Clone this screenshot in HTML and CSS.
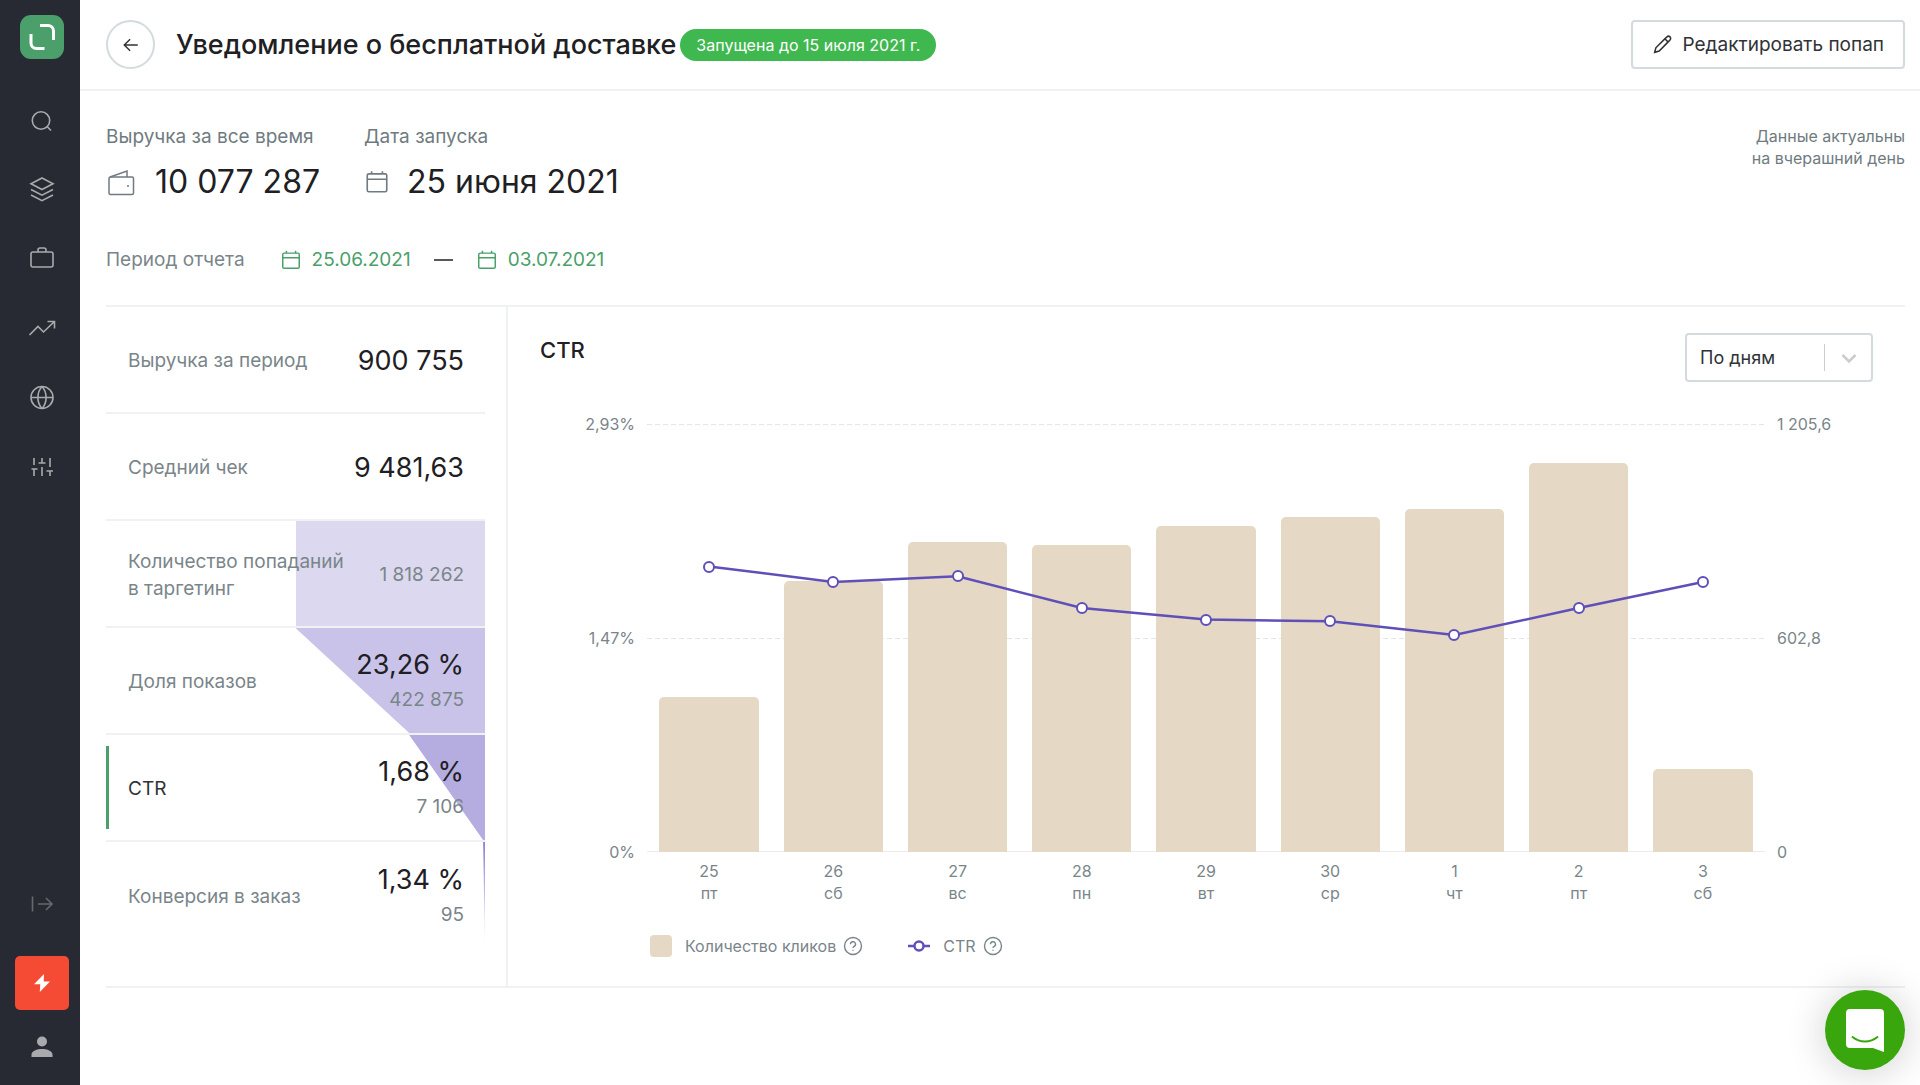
FILE: index.html
```html
<!DOCTYPE html>
<html lang="ru">
<head>
  <meta charset="utf-8">
  <meta name="viewport" content="width=device-width, initial-scale=1">
  <title>Уведомление о бесплатной доставке</title>
  <link rel="stylesheet" href="styles.css">
</head>
<body>
  <svg class="sprite" aria-hidden="true">
    <symbol id="calendar" viewBox="0 0 24 24">
      <rect x="3" y="4.500" width="18" height="16.500" rx="1.500"/>
      <path d="M3 9.500h18M7 2v2.500M17 2v2.500"/>
    </symbol>
    <symbol id="help" viewBox="0 0 20 20">
      <circle cx="10" cy="10" r="8.500"/>
      <path d="M7.500 8.200a2.500 2.500 0 1 1 3.700 2.200c-.8.450-1.200.8-1.200 1.500M10 13.800v1"/>
    </symbol>
  </svg>

  <div class="app">
    <aside class="sidebar">
      <a class="logo" href="#" aria-label="Главная">
        <svg viewBox="0 0 44 44"><path d="M20 10.500h8a5.500 5.500 0 0 1 5.500 5.500v9M24.500 33.500h-8A5.500 5.500 0 0 1 11 28v-9"/></svg>
      </a>
      <nav class="nav" aria-label="Разделы">
        <a class="nav-link" href="#" aria-label="Поиск"><svg class="icon" viewBox="0 0 28 28"><circle cx="13" cy="13.500" r="8.700"/><path d="m19.300 19.800 3.700 3.700"/></svg></a>
        <a class="nav-link" href="#" aria-label="Слои"><svg class="icon" viewBox="0 0 28 28"><path d="m14 2 11 5.800-11 5.700L3 7.800zM3 13.500l11 5.700 11-5.700M3 19l11 5.700L25 19"/></svg></a>
        <a class="nav-link" href="#" aria-label="Товары"><svg class="icon" viewBox="0 0 28 28"><rect x="3" y="7" width="22" height="15" rx="2"/><path d="M10 7V5a2 2 0 0 1 2-2h4a2 2 0 0 1 2 2v2"/></svg></a>
        <a class="nav-link" href="#" aria-label="Аналитика"><svg class="icon" viewBox="0 0 28 28"><path d="m1.500 21 8.500-8.500 5.500 5.500L26.500 7.500M19.500 7.500h7v7"/></svg></a>
        <a class="nav-link" href="#" aria-label="Сайт"><svg class="icon" viewBox="0 0 28 28"><circle cx="14" cy="14.500" r="11"/><path d="M3 14.500h22M14 3.500c-5.500 6-5.500 16 0 22M14 3.500c5.500 6 5.500 16 0 22"/></svg></a>
        <a class="nav-link" href="#" aria-label="Настройки"><svg class="icon" viewBox="0 0 28 28"><path d="M6 6v7M6 17v7M3.500 17h6M14 6v5M14 15v9M10.500 11h7M22 6v9M22 19v5M18.500 19H25"/></svg></a>
      </nav>
      <button class="expand" type="button" aria-label="Развернуть меню"><svg class="icon" viewBox="0 0 28 28"><path d="M4.500 6.500v15M10 14h14M18 8l6 6-6 6"/></svg></button>
      <a class="boost" href="#" aria-label="Быстрый запуск"><svg viewBox="0 0 20 20"><path d="M12 1 2 11.300h6.200L7.800 19 18 8.500h-6.300z"/></svg></a>
      <a class="profile" href="#" aria-label="Профиль"><svg viewBox="0 0 24 24"><circle cx="12" cy="6.500" r="5"/><path d="M1.500 22v-2.500C1.500 16 7 14 12 14s10.500 2 10.500 5.500V22z"/></svg></a>
    </aside>

    <div class="page">
      <header class="header">
        <a class="back" href="#" aria-label="Назад"><svg viewBox="0 0 20 20"><path d="M17.500 10h-15M9 3.500 2.500 10 9 16.500"/></svg></a>
        <h1 class="title">Уведомление о бесплатной доставке</h1>
        <span class="badge">Запущена до 15 июля 2021 г.</span>
        <button class="edit" type="button">
          <svg viewBox="0 0 20 20"><path d="M1.800 18.200 3 13.500 13.500 3l1.200-1a2.200 2.200 0 0 1 3.200 3.200L16.500 6.700 6.500 16.800zM12.500 4l3.500 3.500"/></svg>
          Редактировать попап
        </button>
      </header>

      <main class="content">
        <section class="summary">
          <div class="fact">
            <span class="fact-label">Выручка за все время</span>
            <span class="fact-value"><svg class="wallet" viewBox="0 0 32 32"><rect x="3" y="11" width="24.500" height="17.500" rx="1.500"/><path d="M4 11 21 5v6"/><circle class="dot" cx="22" cy="20" r="1"/></svg>10 077 287</span>
          </div>
          <div class="fact">
            <span class="fact-label">Дата запуска</span>
            <span class="fact-value"><svg class="date-icon"><use href="#calendar"/></svg>25 июня 2021</span>
          </div>
          <p class="note">Данные актуальны<br>на вчерашний день</p>
        </section>

        <section class="period">
          <span class="period-label">Период отчета</span>
          <button class="date" type="button"><svg><use href="#calendar"/></svg>25.06.2021</button>
          <span class="dash"></span>
          <button class="date" type="button"><svg><use href="#calendar"/></svg>03.07.2021</button>
        </section>

        <section class="report">
          <div class="metrics">
            <button class="metric" type="button"><span class="metric-name">Выручка за период</span><span class="metric-value">900 755</span></button>
            <button class="metric" type="button"><span class="metric-name">Средний чек</span><span class="metric-value">9 481,63</span></button>
            <button class="metric" type="button"><span class="funnel funnel-target"></span><span class="metric-name">Количество попаданий<br>в таргетинг</span><span class="metric-count">1 818 262</span></button>
            <button class="metric" type="button"><span class="funnel funnel-shows"></span><span class="metric-name">Доля показов</span><span class="metric-figures"><span class="metric-value">23,26 %</span><span class="metric-count">422 875</span></span></button>
            <button class="metric metric-active" type="button"><span class="funnel funnel-ctr"></span><span class="metric-name">CTR</span><span class="metric-figures"><span class="metric-value">1,68 %</span><span class="metric-count">7 106</span></span></button>
            <button class="metric" type="button"><span class="funnel funnel-orders"></span><span class="metric-name">Конверсия в заказ</span><span class="metric-figures"><span class="metric-value">1,34 %</span><span class="metric-count">95</span></span></button>
          </div>

          <div class="panel">
            <div class="panel-head">
              <h2 class="panel-title">CTR</h2>
              <div class="select">
                <select aria-label="Группировка"><option>По дням</option><option>По неделям</option><option>По месяцам</option></select>
                <svg viewBox="0 0 20 20"><path d="m3.500 7 6.500 6.500L16.500 7"/></svg>
              </div>
            </div>

            <div class="chart">
              <div class="axis axis-left"><span>2,93%</span><span>1,47%</span><span>0%</span></div>
              <div class="plot">
                <div class="grid-lines"><i></i><i></i><i></i></div>
                <div class="bars">
                  <span class="bar" style="height:36.300%"></span>
                  <span class="bar" style="height:63.300%"></span>
                  <span class="bar" style="height:72.400%"></span>
                  <span class="bar" style="height:71.700%"></span>
                  <span class="bar" style="height:76.200%"></span>
                  <span class="bar" style="height:78.300%"></span>
                  <span class="bar" style="height:80.200%"></span>
                  <span class="bar" style="height:90.900%"></span>
                  <span class="bar" style="height:19.400%"></span>
                </div>
                <svg class="line" viewBox="0 0 900 1000" preserveAspectRatio="none"><polyline points="50,333 150,369 250,356 350,430 450,457 550,461 650,493 750,430 850,369"/></svg>
                <div class="points">
                  <span><i style="top:33.300%"></i></span>
                  <span><i style="top:36.900%"></i></span>
                  <span><i style="top:35.600%"></i></span>
                  <span><i style="top:43%"></i></span>
                  <span><i style="top:45.700%"></i></span>
                  <span><i style="top:46.100%"></i></span>
                  <span><i style="top:49.300%"></i></span>
                  <span><i style="top:43%"></i></span>
                  <span><i style="top:36.900%"></i></span>
                </div>
              </div>
              <div class="axis"><span>1 205,6</span><span>602,8</span><span>0</span></div>
              <div class="days">
                <span>25<br>пт</span><span>26<br>сб</span><span>27<br>вс</span><span>28<br>пн</span><span>29<br>вт</span><span>30<br>ср</span><span>1<br>чт</span><span>2<br>пт</span><span>3<br>сб</span>
              </div>
            </div>

            <div class="legend">
              <span class="legend-item"><span class="swatch"></span>Количество кликов<svg class="help"><use href="#help"/></svg></span>
              <span class="legend-item"><svg class="legend-line" viewBox="0 0 22 22"><path d="M0 11h22"/><circle cx="11" cy="11" r="4.500"/></svg>CTR<svg class="help"><use href="#help"/></svg></span>
            </div>
          </div>
        </section>
      </main>
    </div>
  </div>

  <button class="chat" type="button" aria-label="Открыть чат">
    <svg viewBox="0 0 40 44"><path class="bubble" d="M5 1h30a4 4 0 0 1 4 4v39l-11-4H5a4 4 0 0 1-4-4V5a4 4 0 0 1 4-4z"/><path class="smile" d="M7.500 29c7.500 6 17.500 6 25 0"/></svg>
  </button>
</body>
</html>
```

FILE: styles.css
```css
* {
  box-sizing: border-box;
}

body {
  margin: 0;
  background: #fff;
  color: #1e2024;
  font-family: Inter, "Liberation Sans", sans-serif;
  font-size: 19px;
  line-height: 24px;
}

button,
select {
  margin: 0;
  padding: 0;
  border: 0;
  background: none;
  color: inherit;
  font: inherit;
  cursor: pointer;
}

svg {
  display: block;
  flex: none;
  fill: none;
  stroke: currentColor;
}

.sprite {
  position: absolute;
  width: 0;
  height: 0;
}

.app {
  display: flex;
  min-height: 100vh;
}

/* Sidebar */

.sidebar {
  display: flex;
  flex: none;
  flex-direction: column;
  align-items: center;
  width: 80px;
  padding: 15px 0 19px 4px;
  background: #272a32;
  color: #a9aaad;
}

.logo {
  width: 44px;
  height: 44px;
  border-radius: 11px;
  background: #4a9f6b;
  color: #fff;
  stroke-width: 3;
}

.nav {
  display: flex;
  flex-direction: column;
  margin: 27px 0 auto;
}

.nav-link {
  display: flex;
  align-items: center;
  height: 69px;
  color: inherit;
}

.icon {
  width: 28px;
  height: 28px;
  stroke-width: 1.6;
}

.expand {
  height: 40px;
  margin-bottom: 32px;
  color: #65686d;
}

.boost {
  display: flex;
  align-items: center;
  justify-content: center;
  width: 54px;
  height: 54px;
  margin-bottom: 18px;
  border-radius: 5px;
  background: #f54a33;
}

.boost svg {
  width: 20px;
  height: 20px;
  fill: #fff;
  stroke: none;
}

.profile {
  display: flex;
  align-items: center;
  height: 38px;
  color: inherit;
}

.profile svg {
  width: 24px;
  height: 24px;
  fill: currentColor;
  stroke: none;
}

/* Header */

.page {
  flex: 1;
  min-width: 0;
}

.header {
  display: flex;
  align-items: center;
  height: 91px;
  padding: 0 15px 0 26px;
  border-bottom: 2px solid #f0f1f2;
}

.back {
  display: flex;
  align-items: center;
  justify-content: center;
  width: 49px;
  height: 49px;
  border: 2px solid #d3dbdf;
  border-radius: 50%;
  color: #303236;
}

.back svg {
  width: 18px;
  height: 18px;
  stroke-width: 1.6;
}

.title {
  margin: 0 4px 0 21px;
  font-size: 27px;
  font-weight: 500;
  line-height: 36px;
}

.badge {
  padding: 4px 16px;
  border-radius: 16px;
  background: #40b850;
  color: #fff;
  font-size: 16px;
}

.edit {
  display: flex;
  align-items: center;
  gap: 11px;
  height: 49px;
  margin-left: auto;
  padding: 0 19px 0 20px;
  border: 2px solid #d3dbdf;
  border-radius: 4px;
  color: #303236;
}

.edit svg {
  width: 19px;
  height: 19px;
  stroke-width: 1.6;
}

/* Summary */

.content {
  padding: 34px 15px 40px 26px;
}

.summary {
  display: flex;
  gap: 44px;
}

.fact {
  display: flex;
  flex-direction: column;
  gap: 13px;
}

.fact-label,
.note {
  color: #6f7b80;
}

.fact-value {
  display: flex;
  align-items: center;
  gap: 17px;
  font-size: 32px;
  line-height: 40px;
}

.fact-value svg {
  color: #6f7b80;
}

.wallet {
  width: 32px;
  height: 32px;
  stroke-width: 1.5;
}

.wallet .dot {
  fill: currentColor;
  stroke: none;
}

.date-icon {
  width: 26px;
  height: 26px;
  stroke-width: 1.5;
}

.note {
  margin: 0 0 0 auto;
  font-size: 16px;
  line-height: 22px;
  text-align: right;
}

.period {
  display: flex;
  align-items: center;
  margin: 46px 0 33px;
}

.period-label {
  margin-right: 35px;
  color: #7a858a;
}

.date {
  display: flex;
  align-items: center;
  gap: 10px;
  color: #4a9f6b;
}

.date svg {
  width: 22px;
  height: 22px;
  stroke-width: 1.6;
}

.dash {
  width: 19px;
  height: 2px;
  margin: 0 23px;
  background: #55585c;
}

/* Report */

.report {
  display: flex;
  border-top: 2px solid #f0f1f2;
  border-bottom: 2px solid #f0f1f2;
}

.metrics {
  display: flex;
  flex: none;
  flex-direction: column;
  width: 402px;
  padding-right: 21px;
  border-right: 2px solid #f0f1f2;
}

.metric {
  position: relative;
  z-index: 0;
  display: flex;
  align-items: center;
  justify-content: space-between;
  height: 107px;
  padding: 2px 21px 0 22px;
  border-bottom: 2px solid #f0f1f2;
  text-align: left;
}

.metric:last-child {
  border-bottom: 0;
}

.metric-name {
  color: #7a858a;
  line-height: 27px;
}

.metric-figures {
  display: flex;
  flex-direction: column;
  padding-bottom: 3px;
  text-align: right;
}

.metric-value {
  font-size: 27px;
  line-height: 40px;
}

.metric-count {
  color: #7a858a;
  line-height: 30px;
}

.metric-active .metric-name {
  color: #303236;
}

.metric-active::before {
  content: "";
  position: absolute;
  top: 11px;
  bottom: 11px;
  left: 0;
  width: 3px;
  background: #4a9f6b;
}

.funnel {
  position: absolute;
  z-index: -1;
  inset: 0 0 0 50%;
}

.funnel-target {
  background: #dcd8ef;
}

.funnel-shows {
  background: #c9c3e9;
  clip-path: polygon(0 0, 100% 0, 100% 100%, 60% 100%);
}

.funnel-ctr {
  background: #b5ace0;
  clip-path: polygon(60% 0, 100% 0, 100% 100%, 99% 100%);
}

.funnel-orders {
  background: linear-gradient(#8d80d8, #fff);
  clip-path: polygon(99% 0, 100% 0, 100% 100%);
}

/* Chart */

.panel {
  flex: 1;
  min-width: 0;
  padding: 26px 32px 28px;
}

.panel-head {
  display: flex;
  align-items: flex-start;
  justify-content: space-between;
  margin-bottom: 42px;
}

.panel-title {
  margin: 0;
  font-size: 22px;
  font-weight: 500;
  line-height: 34px;
}

.select {
  position: relative;
}

.select select {
  width: 188px;
  height: 49px;
  padding-left: 13px;
  border: 2px solid #d3dbdf;
  border-radius: 4px;
  appearance: none;
  color: #303236;
  font-size: 18px;
}

.select::after {
  content: "";
  position: absolute;
  top: 11px;
  bottom: 11px;
  right: 48px;
  width: 1px;
  background: #ccc;
}

.select svg {
  position: absolute;
  top: 15px;
  right: 14px;
  width: 20px;
  height: 20px;
  color: #ccc;
  stroke-width: 2.5;
  pointer-events: none;
}

.chart {
  display: grid;
  grid-template-columns: 95px 1fr 96px;
  column-gap: 12px;
  color: #7a858a;
  font-size: 16px;
  line-height: 22px;
}

.axis {
  display: flex;
  flex-direction: column;
  justify-content: space-between;
  margin: -11px 0;
}

.axis-left {
  text-align: right;
}

.plot {
  position: relative;
  height: 428px;
}

.grid-lines {
  position: absolute;
  inset: 0;
  display: flex;
  flex-direction: column;
  justify-content: space-between;
}

.grid-lines i {
  height: 1px;
  background: repeating-linear-gradient(90deg, #e3e6e8 0 5px, transparent 5px 8px);
}

.grid-lines i:last-child {
  background: #e9ebec;
}

.bars,
.points,
.days {
  display: grid;
  grid-template-columns: repeat(9, 1fr);
}

.bars {
  position: relative;
  height: 100%;
  align-items: end;
}

.bar {
  width: 80%;
  margin: 0 auto;
  border-radius: 5px 5px 0 0;
  background: #e5d8c5;
}

.line {
  position: absolute;
  inset: 0;
  width: 100%;
  height: 100%;
  color: #5f4fb8;
}

.line polyline {
  stroke-width: 2.5;
  vector-effect: non-scaling-stroke;
}

.points {
  position: absolute;
  inset: 0;
}

.points span {
  position: relative;
}

.points i {
  position: absolute;
  left: 50%;
  width: 12px;
  height: 12px;
  margin: -6px;
  border: 2px solid #5f4fb8;
  border-radius: 50%;
  background: #fff;
}

.days {
  grid-column: 2;
  padding-top: 8px;
  text-align: center;
}

.legend {
  display: flex;
  gap: 45px;
  margin: 30px 0 0 110px;
  color: #7a858a;
  font-size: 16px;
}

.legend-item {
  display: flex;
  align-items: center;
}

.swatch,
.legend-line {
  width: 22px;
  height: 22px;
  margin-right: 13px;
  border-radius: 4px;
}

.swatch {
  background: #e5d8c5;
}

.legend-line {
  color: #5f4fb8;
  fill: #fff;
  stroke-width: 2.5;
}

.help {
  width: 20px;
  height: 20px;
  margin-left: 7px;
  stroke-width: 1.4;
}

/* Chat launcher */

.chat {
  position: fixed;
  right: 15px;
  bottom: 15px;
  display: flex;
  align-items: center;
  justify-content: center;
  width: 80px;
  height: 80px;
  border-radius: 50%;
  background: #3aa60d;
  box-shadow: 0 2px 40px rgba(0, 0, 0, 0.2);
}

.chat svg {
  width: 40px;
  height: 44px;
}

.bubble {
  fill: #fff;
  stroke: none;
}

.smile {
  stroke: #3aa60d;
  stroke-width: 2;
  stroke-linecap: round;
}
```
